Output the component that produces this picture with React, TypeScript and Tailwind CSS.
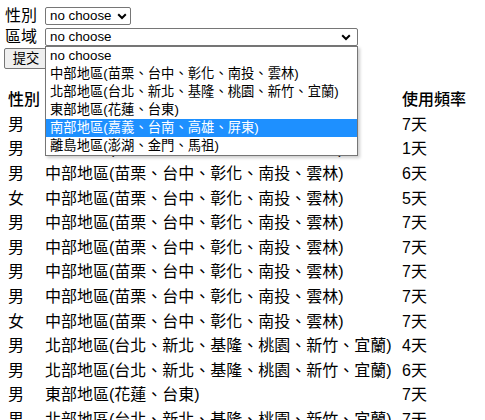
import React from 'react';

const CENTER = '中部地區(苗栗、台中、彰化、南投、雲林)';
const NORTH = '北部地區(台北、新北、基隆、桃園、新竹、宜蘭)';
const EAST = '東部地區(花蓮、台東)';

const rows: [string, string, string][] = [
  ['男', CENTER, '7天'],
  ['男', CENTER, '1天'],
  ['男', CENTER, '6天'],
  ['女', CENTER, '5天'],
  ['男', CENTER, '7天'],
  ['男', CENTER, '7天'],
  ['男', CENTER, '7天'],
  ['男', CENTER, '7天'],
  ['女', CENTER, '7天'],
  ['男', NORTH, '4天'],
  ['男', NORTH, '6天'],
  ['男', EAST, '7天'],
  ['男', NORTH, '7天'],
];

const options = [
  'no choose',
  CENTER,
  NORTH,
  EAST,
  '南部地區(嘉義、台南、高雄、屏東)',
  '離島地區(澎湖、金門、馬祖)',
];

const Chevron = () => (
  <svg width="10" height="7" viewBox="0 0 10 7" className="shrink-0">
    <polyline points="1.2,1.3 5,5 8.8,1.3" fill="none" stroke="#000" strokeWidth="2" />
  </svg>
);

const App: React.FC = () => {
  return (
    <div className="relative h-[420px] overflow-hidden bg-white pl-[4px] pt-[7px] text-black font-['Liberation_Sans','Noto_Sans_CJK_TC',sans-serif]">
      {/* filter form */}
      <div className="flex h-[18px] items-center">
        <span className="w-[41px] pl-[1px] text-[16px] leading-none">性別</span>
        <div className="flex h-[18px] w-[86px] items-center justify-between rounded-[2px] border border-[#767676] pl-[4px] pr-[3px] text-[13.33px]">
          <span>no choose</span>
          <Chevron />
        </div>
      </div>
      <div className="mt-[3px] flex h-[18px] items-center">
        <span className="w-[41px] pl-[1px] text-[16px] leading-none">區域</span>
        <div className="flex h-[18px] w-[313px] items-center justify-between rounded-[2px] border border-[#767676] pl-[4px] pr-[6px] text-[13.33px]">
          <span>no choose</span>
          <Chevron />
        </div>
      </div>
      <div className="mt-[2px] flex h-[21px] w-[44px] items-center justify-center rounded-[2px] border border-[#767676] bg-[#efefef] text-[13.33px]">
        提交
      </div>

      {/* open region dropdown */}
      <div className="absolute left-[45px] top-[46px] z-10 w-[313px] border border-[#767676] bg-white text-[13.33px] shadow-[2px_2px_3px_rgba(0,0,0,0.2)]">
        {options.map((o, i) => (
          <div
            key={o}
            className={
              i === 4
                ? 'flex h-[18px] items-center bg-[#1e90ff] pl-[4px] text-white'
                : 'flex h-[18px] items-center pl-[4px]'
            }
          >
            {o}
          </div>
        ))}
      </div>

      {/* data table */}
      <div className="ml-[4px] mt-[19px] text-[16px]">
        <div className="grid h-[24.6px] grid-cols-[37px_357px_auto] items-center font-medium">
          <span>性別</span>
          <span>區域</span>
          <span>使用頻率</span>
        </div>
        {rows.map((r, i) => (
          <div key={i} className="grid h-[24.6px] grid-cols-[37px_357px_auto] items-center whitespace-nowrap">
            <span>{r[0]}</span>
            <span>{r[1]}</span>
            <span>{r[2]}</span>
          </div>
        ))}
      </div>
    </div>
  );
};

export default App;
